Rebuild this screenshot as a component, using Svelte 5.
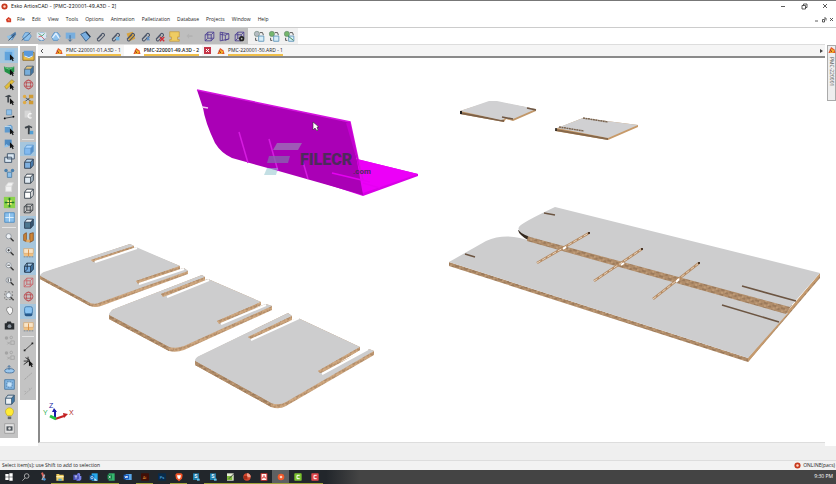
<script>
  const menus = ['File', 'Edit', 'View', 'Tools', 'Options', 'Animation', 'Palletization', 'Database', 'Projects', 'Window', 'Help'];

  const arrow = '<path d="M8 6l5 5-2 .2 1.4 2.2-1.2.8-1.4-2.4L8 13z" fill="#111"/>';
  const clip = '<path d="M3.5 10.5L9.5 4a2 2 0 0 1 2.6 2.4L6.5 12.2a1.6 1.6 0 0 1-2.6-1.6L9.2 5.4" fill="none" stroke="#4b5568" stroke-width="1.2"/>';
  const cube = (front, top, side, line) =>
    `<path d="M3 6h7v7H3z" fill="${front}"/><path d="M3 6l2.5-3.5H13L10 6z" fill="${top}"/><path d="M10 6l3-3.5v7L10 13z" fill="${side}"/><path d="M3 6h7v7H3zM3 6l2.5-3.5H13L10 6M13 2.5v7L10 13" fill="none" stroke="${line}" stroke-width="1" stroke-linejoin="round"/>`;
  const wire = (c) =>
    `<path d="M2.5 5.5h7v7h-7zM5.5 2.5h7v7h-7zM2.5 5.5l3-3M9.5 5.5l3-3M2.5 12.5l3-3M9.5 12.5l3-3" fill="none" stroke="${c}" stroke-width="1"/>`;
  const lens = (extra = '') =>
    `<circle cx="6.5" cy="6" r="3" fill="#eef2f6" stroke="#8a9098"/><path d="M8.8 8.3l3.4 3.6" stroke="#333" stroke-width="1.5"/>${extra}`;
  const net = '<path d="M3 8l3-5h4l3 4-3 5H5z" fill="#8fc3ee" stroke="#4d86bd" stroke-width=".8"/>';
  const balls = (c) =>
    `<circle cx="4" cy="4.5" r="2" fill="${c}"/><circle cx="9.5" cy="4" r="1.5" fill="none" stroke="${c}"/><path d="M5 9l3 3M5 12l3-3" stroke="${c}"/><path d="M9 8h4v4H9z" fill="none" stroke="${c}"/>`;
  const link = (c) =>
    `<circle cx="4.500" cy="4.500" r="3" fill="${c}" stroke="#5e7a6a" stroke-width=".6"/><path d="M8 3h3l1 3" fill="none" stroke="#444"/><path d="M6.500 7h6v6h-6z" fill="#d7edf8" stroke="#5b93b8"/><path d="M3 9v3h2" fill="none" stroke="#444"/>`;
  const globe =
    '<circle cx="7.5" cy="7.5" r="5" fill="none" stroke="#b94b50"/><ellipse cx="7.500" cy="7.500" rx="2.500" ry="5" fill="none" stroke="#b94b50"/><path d="M3 5.500h9M3 9.500h9" stroke="#b94b50"/>';
  const board =
    '<path d="M2 4h11v8H2z" fill="#efc183"/><path d="M2 3h11v5.500H2z" fill="#f8e4c7" stroke="#d29b58" stroke-width=".6"/><path d="M7.500 4v8" stroke="#d98a3c"/><path d="M2 12.500h11" stroke="#6d7f91" stroke-dasharray="2 1"/>';
  const hammer = '<path d="M3 4.500l5-2 4 2-1 1.500-2-1v8H6.800V5.500L4 6.500z" fill="#3d4349"/>';

  const topMain = [
    ['Select design', '<path d="M5 7l7-5 1 3-5 7z" fill="#4d7dad"/><path d="M2 7l3 5 4-2-2-4z" fill="#8fc1e6"/><path d="M4 12l7-7" stroke="#2b3f58"/>'],
    ['Add design', net + '<path d="M2 12L12 3" stroke="#355980"/>'],
    ['Convert', net + '<path d="M2 3h11v6L7.500 12 2 9z" fill="#d9e8f4"/><path d="M4 4l4 3 3-3" fill="none" stroke="#49a36d"/><path d="M4 8l3-1 4 4" fill="none" stroke="#cf5862"/>'],
    ['Fold', net + '<path d="M4 9l4-5 4 6" fill="none" stroke="#e5f2ff" stroke-width="1.5"/>'],
    ['Fold angle', '<path d="M2 3h11v7H2z" fill="#78aede"/><path d="M7 6v7l-2-2M7 13l2-2" stroke="#345f8b" fill="none"/>'],
    ['Bend', '<path d="M2 5l6-3 5 6-5 5z" fill="#79aee0" stroke="#345f8b"/><path d="M8 2l5 6" stroke="#24364b" stroke-width="1.500"/>'],
    ['Attach', clip],
    ['Attach part', clip + '<path d="M8 8h4v4H8z" fill="#6db2e2"/>'],
    ['Attach board', '<path d="M3 4l7-2 3 8-7 3z" fill="#d7a441"/>' + clip],
    ['Align part', clip + '<path d="M9 8l3 4M12 8l-3 4" stroke="#5f8fc4" stroke-width="1.500"/>'],
    ['Detach', clip + '<path d="M8 8l5 5M13 8l-5 5" stroke="#d32d36" stroke-width="1.500"/>'],
    ['Board', '<path d="M2 2h11v6h-2v3h2v2H2v-2h2V8H2z" fill="#efcc62" stroke="#bf9231" stroke-width=".7"/>'],
    ['Undo', '<path d="M4 7l3-3v6zM7 6h4v2H7z" fill="#b3b3b3"/>']
  ];
  const topCubes = [
    ['Wireframe', wire('#4b3f92')],
    ['Perspective', '<path d="M2.500 2.500l10 2v6l-10 2zM2.500 5l6 1v6l4-2M8.500 6l4-2M5 3v9" fill="none" stroke="#4b3f92"/>'],
    ['View setting', wire('#4b3f92') + '<circle cx="10" cy="10" r="3" fill="#222"/><circle cx="10" cy="10" r="1" fill="#bbb"/>']
  ];
  const topLinks = [
    ['Refresh', link('#b4bbc1')],
    ['Import', link('#74b66c')],
    ['Replace', link('#74b66c') + '<path d="M6 7l6 5" stroke="#287c3e"/>']
  ];

  const colA = [
    [
      ['Select', '<path d="M2 3h9v10H2z" fill="#5fa3dc"/><path d="M2 3l2-2h9v9l-2 3V3z" fill="#8cc4f1"/>' + arrow, 1],
      ['Select face', '<path d="M1 3l4 1h4l4-1v6l-5 3-6-3z" fill="#229146"/><path d="M2 4l5 2 5-2" stroke="#75d28d" fill="none"/>' + arrow],
      ['Measure', '<path d="M2 10l8-8 3 2-9 9z" fill="#e3bf3a" stroke="#8b742a" stroke-width=".6"/>' + arrow],
      ['Select tool', '<path d="M2 4l5-2 3 2-3 1v6H5V5z" fill="#41474d"/>' + arrow],
      ['Place', '<path d="M4 2h6v6H4z" fill="#8fc0e9" stroke="#4e7ea6" stroke-width=".6"/><path d="M1 12l12-2" stroke="#303b46"/><circle cx="2" cy="12" r="1"/><circle cx="12" cy="10" r="1"/>'],
      ['Move', '<path d="M2 4l7-2 2 2v7H2z" fill="#5e9ace"/><path d="M2 4h7v7" fill="none" stroke="#c7e2f5"/>' + arrow],
      ['Rotate', '<path d="M2 3h8v7H2z" fill="#4e8ac1"/><path d="M1 12l3-4 3 3z" fill="#8fc3ee"/>' + arrow],
      ['Copy', '<path d="M5 2h8v6H5zM2 6h8v6H2z" fill="#dce9f4" stroke="#364a62"/>'],
      ['Mate', '<path d="M5 6h5v6H5z" fill="#8dc1ec" stroke="#4e7ea6"/><circle cx="3.500" cy="4" r="2" fill="#497fad"/><circle cx="11" cy="4" r="2" fill="#497fad"/>'],
      ['Hide', '<path d="M3 6h7v6H3zM3 6l3-4h6l-2 4" fill="#f2f2f2" stroke="#d9d9d9"/>'],
      ['Center', '<path d="M1 1h13v13H1z" fill="#8bd34a"/><path d="M7.500 2v11M2 7.500h11" stroke="#1e7e28" stroke-width="2"/><path d="M5 5h5v5H5z" fill="#fff176"/><path d="M7.500 4v7M4 7.500h7" stroke="#286b2b"/>'],
      ['Grid', '<path d="M2 2h11v11H2z" fill="#8bc1ee"/><path d="M7.500 2v11M2 7.500h11" stroke="#e5f4ff"/><path d="M2 2h11v11H2z" fill="none" stroke="#4b8bc0"/>']
    ],
    [
      ['Zoom', lens()],
      ['Zoom in', lens('<path d="M6.500 4.500v3M5 6h3" stroke="#333"/>')],
      ['Zoom out', lens('<path d="M5 6h3" stroke="#333"/>')],
      ['Zoom scale', lens('<path d="M6 4v4M9 4v3" stroke="#333"/>')],
      ['Zoom extents', lens('<path d="M2 2h9v9H2z" fill="none" stroke="#777" stroke-dasharray="2 2"/>')],
      ['Pan', '<path d="M4 7l1-3h2l1-1 1 1 2 1v4l-2 3H7z" fill="#f6f6f6" stroke="#828282"/>'],
      ['Snapshot', '<path d="M2 5h2l1-2h4l1 2h3v7H2z" fill="#292d31"/><circle cx="7.500" cy="8.300" r="2.200" fill="#89929b"/>'],
      ['Group', balls('#a4a4a4')],
      ['Ungroup', balls('#a4a4a4')],
      ['Orbit', '<ellipse cx="7.500" cy="9" rx="5.500" ry="2.500" fill="#9bc8ee" stroke="#446f9b"/><path d="M7 8V3l-2 2M7 3l2 2" fill="none" stroke="#446f9b"/>'],
      ['View plane', '<path d="M2 2h11v11H2z" fill="#85b9e6" stroke="#4676a1"/><path d="M4.500 4.500h6v6h-6z" fill="#c2e1fa" stroke="#4676a1" stroke-dasharray="2 1"/>'],
      ['Extrude', cube('#eef2f5', '#d3dde6', '#407cad', '#35536d')],
      ['Light', '<path d="M5 10C0 4 5 1 7.500 1S15 4 10 10z" fill="#ffeb35" stroke="#b49a14" stroke-width=".6"/><path d="M5.500 11h4v3h-4z" fill="#61666d"/>'],
      ['Render', '<path d="M2 2h11v11H2z" fill="#e4e4e4" stroke="#999"/><path d="M4 5h7v5H4z" fill="#4e555b"/><circle cx="7.500" cy="7.500" r="1.500" fill="#ddd"/>']
    ]
  ];
  const colB = [
    [
      ['Pallet', '<path d="M1 4h13v9H1z" fill="#edbd44" stroke="#8f6b24"/><path d="M2 2h11v6l-5 3-6-3z" fill="#5999db"/><path d="M3 8l5 2 4-2" fill="none" stroke="#fff"/>'],
      ['Wrap', cube('#78aedb', '#e6c478', '#3f78a9', '#4b6174')],
      ['Globe', globe],
      ['Cut', '<path d="M2 4l9 6M2 11l9-7" stroke="#3e4a55"/><circle cx="3" cy="4" r="2" fill="#e0ab44"/><circle cx="3" cy="11" r="2" fill="#e0ab44"/><path d="M8 2h5v4H8zM8 9h5v4H8z" fill="#cf9b35"/>'],
      ['Copy view', '<path d="M3 3h7v8H3z" fill="#d7d7d7"/><path d="M11 7a2.500 2.500 0 1 0 0 4" fill="none" stroke="#f5f5f5" stroke-width="1.500"/>'],
      ['Hammer', hammer + '<path d="M9 9h4v4H9z" fill="#519ed3"/>']
    ],
    [
      ['Solid', cube('#82baf0', '#aed7fc', '#548fca', '#609bd4'), 1],
      ['Solid lines', cube('#7fb0df', '#b4d6f3', '#4d86bd', '#26384e')],
      ['Hidden lines', cube('#dfe9f1', '#ffffff', '#b4c5d3', '#303b46')],
      ['White', cube('#ffffff', '#ffffff', '#efefef', '#303b46')],
      ['Wire', wire('#3f4449')],
      ['Perspective', cube('#4e7891', '#eaf3fa', '#385a76', '#26384e'), 1],
      ['Closure', '<path d="M2 4l3-2v10l-3-1zM9 3l4-1v9l-4 2z" fill="#d08738" stroke="#8a5526"/><path d="M5 10h4v3H5z" fill="#e7ae66"/>', 1],
      ['Texture', board, 1],
      ['Edges', cube('#75ace0', '#a8d0f0', '#4278aa', '#14293d') + '<path d="M6 2.500v7l-3 3" fill="none" stroke="#14293d"/>', 1],
      ['Bounding box', wire('#c8656b')],
      ['Sphere', globe],
      ['Shadow', '<rect x="3" y="6" width="9" height="7" rx="2" fill="#26588a"/><rect x="3" y="2" width="9" height="8" rx="2" fill="#8bc4f2" stroke="#3c76a9"/>', 1],
      ['Board surface', board]
    ],
    [
      ['Distance', '<path d="M3 12L12 4" stroke="#414141"/><path d="M2 11h2v2H2zM11 3h2v2h-2z" fill="#222"/>'],
      ['Angle', '<path d="M2 11l7-5M4 3l5 3M2 7h5M7 2v6" stroke="#222"/>' + arrow],
      ['Point', '<path d="M3 12L12 4" stroke="#999" stroke-dasharray="2 1"/>'],
      ['Path', '<path d="M3 12L12 4M3 8l2 2M8 5l2 2" stroke="#a4a4a4" stroke-dasharray="2 1"/>']
    ]
  ];

  const tabs = [
    { name: 'PMC-220001-01.A3D - 1', active: false },
    { name: 'PMC-220001-49.A3D - 2', active: true },
    { name: 'PMC-220001-50.ARD - 1', active: false }
  ];

  const trays = [
    { depth: 'M40 276L43 273 130 244 134 246 134 248 93 262 91 260 136 248 180 266 180 269 138 284 136 281 184 268 188 271 188 274 101 306Q95 308 90 306L40 279Z',
      face: 'M40 276Q40 274 44 272L130 244 134 246 91 260 93 261 136 247 180 266 136 281 138 283 184 268 188 271 101 302Q96 305 90 303Z',
      cuts: ['M91 260L134 246V248L93 262Z', 'M136 281L180 266V269L138 284Z'],
      gaps: 'M95 262L137 248M139 284L184 269' },
    { depth: 'M109 315L112 310 202 275 205 277 205 281 161 297 161 294 208 279 261 302 261 305 219 323 217 321 266 304 272 306V310L184 350Q176 353 169 351L109 319Z',
      face: 'M109 315Q109 312 114 309L202 275 205 277 161 294 164 296 208 279 261 302 217 321 219 323 266 304 272 306 184 346Q176 349 169 347Z',
      cuts: ['M161 294L205 277V281L163 297Z', 'M217 321L261 302V305L219 324Z'],
      gaps: 'M167 297L209 280M221 324L266 305' },
    { depth: 'M195 361L198 357 288 313 292 316V320L251 339 248 337 298 318 360 347V350L320 374 318 372 369 349 374 351V355L286 406Q279 410 271 407L195 365Z',
      face: 'M195 361Q195 358 199 356L288 313 292 316 248 337 251 339 298 318 360 347 318 371 321 373 369 349 374 351 286 402Q279 406 271 403Z',
      cuts: ['M248 337L292 316V319L251 339Z', 'M318 371L360 347V350L320 373Z'],
      gaps: 'M251 340L299 318M322 374L368 349M360 352L369 347' }
  ];
  const crosses = ['M537 263L589 233', 'M594 281L642 249', 'M653 299L699 263'];

  const tasks = [
    ['Start', '<path d="M2 3h5v4H2zM8 2h5v5H8zM2 8h5v4H2zM8 8h5v5H8z" fill="#fff"/>', 0],
    ['Search', '<circle cx="8.500" cy="6" r="3.500" fill="none" stroke="#ddd"/><path d="M6 9l-4 4" stroke="#ddd"/>', 0],
    ['Snip', '<path d="M6 1l3 8" stroke="#e2655c" stroke-width="3"/><path d="M10 4l-4 8" stroke="#a8b7c6" stroke-width="2"/><circle cx="9.500" cy="11" r="2" fill="#4d94d1"/>', 0],
    ['Explorer', '<path d="M2 3h4l1 1h6v9H2z" fill="#efcd62"/><path d="M2 6h11v2H2z" fill="#fff1b6"/><path d="M5 10h5v3H5z" fill="#4ba5d4"/>', 1],
    ['Teams', '<circle cx="10" cy="4" r="2.500" fill="#7b83eb"/><path d="M2 4h8v8H2z" fill="#4b53bc"/><path d="M10 6h4v5l-2 2H6l4-3z" fill="#7b83eb"/><path d="M4 6h4M6 6v4" stroke="#fff"/>', 1],
    ['Outlook', '<path d="M4 2h9v11H4z" fill="#28a8ea"/><path d="M1 5h7v7H1z" fill="#0a64b8"/><circle cx="4.500" cy="8.500" r="1.800" fill="none" stroke="#fff"/><path d="M8 9l5 4H8z" fill="#bfe5ff"/>', 1],
    ['Excel', '<path d="M4 2h9v11H4z" fill="#35b66d"/><path d="M2 4h7v7H2z" fill="#107c41"/><path d="M4 5.500l3 4M7 5.500l-3 4" stroke="#fff"/>', 1],
    ['Word', '<path d="M4 3h9v9H4z" fill="#59a7e8"/><path d="M1 4h8v7H1z" fill="#185abd"/><path d="M3 6l1 3 1-3 1 3 1-3" fill="none" stroke="#fff"/>', 0],
    ['Illustrator', '<rect x="1.500" y="2" width="12" height="11" rx="1" fill="#400f08"/><text x="4" y="10" font-size="6" fill="#f59b35" font-family="Roboto">Ai</text>', 1],
    ['Photoshop', '<rect x="1.500" y="2" width="12" height="11" rx="1" fill="#082b4a"/><text x="4" y="10" font-size="6" fill="#56b9f4" font-family="Roboto">Ps</text>', 0],
    ['Brave', '<path d="M4 2h7l2 2-1 6-4.500 4L3 10 2 4z" fill="#f25427"/><path d="M4.500 5h6l-1 4-2 2-2-2z" fill="#fff"/>', 1],
    ['Studio', '<path d="M3 2h9v10H3z" fill="#1e7ca9"/><text x="5" y="9" font-size="8" font-weight="700" fill="#e9f7ff" font-family="Roboto">S</text><path d="M9 10h4v3H9z" fill="#64c4ec"/>', 0],
    ['Studio designer', '<path d="M3 2h9v10H3z" fill="#1e7ca9"/><text x="5" y="9" font-size="8" font-weight="700" fill="#e9f7ff" font-family="Roboto">S</text><path d="M9 10h4v3H9z" fill="#64c4ec"/>', 1],
    ['Notepad++', '<path d="M3 2h10v11H3z" fill="#e7efd5"/><path d="M3 6h8v6H3z" fill="#7dbb3b"/><path d="M6 10l7-7" stroke="#3d4143" stroke-width="1.500"/>', 1],
    ['Presentation', '<circle cx="7.500" cy="7.500" r="5.500" fill="#d4472d"/><path d="M7.500 2v6h5.500A6 6 0 0 0 7.500 2" fill="#f4a08c"/><path d="M3 6h5v5H3z" fill="#a72b17"/>', 1],
    ['Acrobat', '<path d="M2.500 2h10v11h-10z" fill="#e83b38"/><path d="M4 3h7v9H4z" fill="#fff3f2"/><path d="M5 10l2.500-5 2.500 5M5 8.500h5" fill="none" stroke="#d52827"/>', 1],
    ['ArtiosCAD', '<circle cx="7.500" cy="7.500" r="5" fill="#ef5a2c"/><circle cx="7.500" cy="7.500" r="2" fill="#ffd4bf"/>', 2],
    ['Camtasia', '<rect x="2" y="2" width="11" height="11" rx="1" fill="#7ac22e"/><path d="M10 5H6v5h4" fill="none" stroke="#fff" stroke-width="1.500"/>', 1],
    ['Recorder', '<rect x="2" y="2" width="11" height="11" rx="1" fill="#e0474c"/><path d="M10 5H6v5h4" fill="none" stroke="#fff" stroke-width="1.500"/>', 1]
  ];
</script>

{#snippet tool(item)}
  <button class="tool" class:on={item[2]} aria-label={item[0]} title={item[0]}>
    <svg viewBox="0 0 15 15">{@html item[1]}</svg>
  </button>
{/snippet}

{#snippet logo()}
  <svg class="logo" viewBox="0 0 8 8"><circle cx="4" cy="4" r="3.500" fill="#c8391d" /><circle cx="4" cy="4" r="1.400" fill="#ffd9c8" /></svg>
{/snippet}

{#snippet mark()}
  <svg class="mark" viewBox="0 0 9 9"><path d="M1 8L4 1l4 3 1 4z" fill="#e2552e" /><path d="M4 3l4 2-2 3H3z" fill="#f2b32a" /><path d="M3 4l2 3" stroke="#8a2f18" /></svg>
{/snippet}

<div class="app">
  <header class="title">
    {@render logo()}
    <span>Esko ArtiosCAD - [PMC-220001-49.A3D - 2]</span>
    <div class="win">
      <button aria-label="Minimize"><svg viewBox="0 0 8 8"><path d="M2 4.500h4" /></svg></button>
      <button aria-label="Restore"><svg viewBox="0 0 8 8"><path d="M2 3.500h3.500V7H2zM3.500 3.500V2H7v3.500H5.500" /></svg></button>
      <button aria-label="Close"><svg viewBox="0 0 8 8"><path d="M2 2l4 4M6 2L2 6" /></svg></button>
    </div>
  </header>

  <nav class="menu">
    <svg class="logo" viewBox="0 0 8 8"><path d="M2 7L1 4l3-3 3 2v4z" fill="#d43c25" /><path d="M3 4l2-1v3z" fill="#f6b09a" /></svg>
    {#each menus as m}<button>{m}</button>{/each}
    <div class="win small">
      <button aria-label="Minimize document"><svg viewBox="0 0 8 8"><path d="M3 6h3" /></svg></button>
      <button aria-label="Restore document"><svg viewBox="0 0 8 8"><path d="M2.500 4.500h2V7h-2zM4 3h2v2.500" /></svg></button>
      <button aria-label="Close document"><svg viewBox="0 0 8 8"><path d="M2 3l3 3M5 3L2 6" /></svg></button>
    </div>
  </nav>

  <div class="bar">
    <div class="gray">
      <div class="set main">{#each topMain as t}{@render tool(t)}{/each}</div>
      <div class="set">{#each topCubes as t}{@render tool(t)}{/each}</div>
    </div>
    <div class="set light">{#each topLinks as t}{@render tool(t)}{/each}</div>
  </div>

  <div class="body">
    <aside class="rail a">
      {#each colA as g}<div class="group" style:flex-grow={g.length}>{#each g as t}{@render tool(t)}{/each}</div>{/each}
    </aside>
    <aside class="rail b">
      {#each colB as g}<div class="group" style:flex-grow={g.length}>{#each g as t}{@render tool(t)}{/each}</div>{/each}
    </aside>

    <main>
      <div class="tabs">
        <button class="step" aria-label="Previous tab"><svg viewBox="0 0 6 6"><path d="M4 1L2 3l2 2" fill="none" stroke="#555" /></svg></button>
        {#each tabs as t}
          <button class="tab" class:active={t.active}>{@render mark()}<span>{t.name}</span></button>
          {#if t.active}
            <button class="close" aria-label="Close tab"><svg viewBox="0 0 7 7"><path d="M2 2l3 3M5 2L2 5" stroke="#fff" /></svg></button>
          {/if}
        {/each}
        <button class="step last" aria-label="Next tab"><svg viewBox="0 0 6 6"><path d="M2 1l3 2-3 2z" fill="#444" /></svg></button>
      </div>

      <div class="canvas">
        <svg viewBox="40 58 785 384" preserveAspectRatio="xMinYMin meet">
          <defs>
            <pattern id="wood" width="7" height="5" patternUnits="userSpaceOnUse" patternTransform="rotate(20)">
              <rect width="7" height="5" fill="#c9a17a" />
              <path d="M0 1h3M4 3h2M2 4h1" stroke="#8f6d50" stroke-width=".8" />
              <path d="M3 2h2M0 3h1M5 0h1" stroke="#e0bc92" stroke-width=".8" />
            </pattern>
            <pattern id="bark" width="9" height="5" patternUnits="userSpaceOnUse" patternTransform="rotate(17)">
              <rect width="9" height="5" fill="#b08c69" />
              <path d="M0 1h4M5 3h3" stroke="#7c5f46" stroke-width=".8" />
              <path d="M4 2h2M1 4h2" stroke="#d0ac86" />
            </pattern>
          </defs>

          <g>
            <path d="M460 111L492 101 536 109V111L513 121 506 119 504 122 460 114Z" fill="#c19769" />
            <path d="M460 112L504 120V122L460 114Z" fill="#7d6148" />
            <path d="M460 111L489 101 497 101 536 109 513 119 503 117 505 119 501 120Z" fill="#d0d0d2" />
            <path d="M527 108l9 2M502 117l11 2" stroke="#6f5846" stroke-width="1.500" />
            <path d="M461 111v3" stroke="#222" stroke-width="2" />
            <path d="M555 129L583 118 638 125V127L608 140 555 131Z" fill="#c79a69" />
            <path d="M556 129L608 138V140L556 131Z" fill="#86684b" />
            <path d="M557 128L583 118 638 125 608 138Z" fill="#d0d0d2" />
            <path d="M583 118l25 4M559 127l25 4" stroke="#796450" stroke-width="1.500" stroke-dasharray="2 .5" />
            <path d="M556 128v3" stroke="#222" stroke-width="1.500" />
          </g>

          <g>
            <path d="M518 230Q519 235 528 240L540 242V238Z" fill="#34291f" />
            <path d="M449 262L748 358 820 274V278L748 362 449 266Z" fill="url(#bark)" />
            <path d="M748 358L820 273V276L748 362Z" fill="#c59a6d" />
            <path d="M449 262L486 241Q502 234 520 238L528 240 788 313 748 358Z" fill="#cdcdce" />
            <path d="M528 236L792 305 786 314 527 241Z" fill="url(#bark)" />
            <path d="M555 207L820 273 790 307 530 237Q516 232 519 227 521 223 555 207Z" fill="#cdcdce" />
            {#each crosses as c}
              <path d={c} stroke="#b58a62" stroke-width="2.500" />
              <path d={c} stroke="#e9d5bd" stroke-width="1" stroke-dasharray="4 2" />
            {/each}
            <path d="M563 249l3-2M621 265l3-2M676 282l3-3" stroke="#fff" stroke-width="2" />
            <path d="M588 233h2M641 249h2M698 263h2" stroke="#4a3525" stroke-width="2" />
            <path d="M742 286L796 301M722 305L779 322M544 213l11 2M465 254l10 3" stroke="#6c5542" stroke-width="1.600" />
          </g>

          <g>
            {#each trays as t}
              <path d={t.depth} fill="url(#wood)" />
              <path d={t.face} fill="#cdcdce" />
              {#each t.cuts as c}<path d={c} fill="url(#wood)" />{/each}
              <path d={t.gaps} stroke="#fff" stroke-width="2" />
            {/each}
            <path d="M40 276L90 303V306L40 279ZM109 315L169 347V351L109 319ZM195 361L271 403V407L195 365Z" fill="url(#bark)" />
          </g>

          <g>
            <path d="M357 159L418 174V176L363 196 320 182 332 170Z" fill="#d800e6" />
            <path d="M357 159L418 174 363 193 350 170Z" fill="#ec00f8" />
            <path d="M197 90L350 122 363 195 275 170 232 158Q221 153 215 143 205 122 203 108Z" fill="#aa00b6" />
            <path d="M197 90L350 122 358 159 363 180" fill="none" stroke="#d512df" stroke-width="1.500" />
            <path d="M346 123l4-1 8 37 2 12z" fill="#c400d0" />
            <path d="M239 132l9 31M269 139l9 32M303 162l5 17" stroke="#d51ce0" stroke-width="1.500" />
            <path d="M332 173l38 9M363 183l17 5" stroke="#e600f2" stroke-width="1.500" />
            <path d="M202 107l6 1" stroke="#f3c8f5" stroke-width="1.500" />
          </g>

          <g>
            <path d="M277 143h25l-4 7h-25z" fill="#9a78b6" opacity=".75" />
            <path d="M269 156h21l-2 7h-21z" fill="#8468ac" opacity=".75" />
            <path d="M267 168h11l-2 7h-12z" fill="#91c5ce" opacity=".55" />
            <text x="300" y="165" class="brand">FILECR</text>
            <text x="353" y="174" class="domain">.com</text>
            <path d="M313 122v8l2-2 2 3 1-1-1-3h2z" fill="#fff" stroke="#333" stroke-width=".6" />
          </g>

          <g>
            <path d="M55 418V410" stroke="#1c1fa8" stroke-width="2" /><path d="M52 412l2-4 3 4z" fill="#1c1fa8" />
            <path d="M55 419l9-3" stroke="#c42222" stroke-width="2" /><path d="M63 413l5 1-4 4z" fill="#c42222" />
            <path d="M56 419l-6-3" stroke="#28c745" stroke-width="3" />
            <text x="49" y="408" class="axis" fill="#1c1fa8">Z</text>
            <text x="69" y="415" class="axis" fill="#b21f2b">X</text>
            <text x="43" y="415" class="axis" fill="#37b457">Y</text>
          </g>
        </svg>
      </div>
    </main>

    <aside class="dock">
      <button>{@render mark()}<span>PMC-220001</span></button>
    </aside>
  </div>

  <footer class="status">
    <span>Select item(s); use Shift to add to selection</span>
    <span class="online">{@render logo()}ONLINE(pacs)</span>
  </footer>

  <div class="taskbar">
    {#each tasks as t}
      <button class:open={t[2]} class:current={t[2] === 2} aria-label={t[0]}><svg viewBox="0 0 15 15">{@html t[1]}</svg></button>
    {/each}
    <time>9:30 PM</time>
  </div>
</div>

<style>
  :global(body) { margin: 0; background: #fff; }
  .app {
    display: flex; flex-direction: column; height: 100vh; overflow: hidden;
    box-sizing: border-box; border-top: 1px solid #777;
    font: 5px/8px "Open Sans", "Noto Sans", sans-serif; color: #222; background: #fff;
  }
  button { font: inherit; color: inherit; background: none; border: 0; padding: 0; margin: 0; display: flex; align-items: center; justify-content: center; }
  svg { display: block; }
  .logo { width: 7px; height: 7px; flex: none; }
  .title { display: flex; align-items: center; gap: 3px; height: 10px; padding-left: 1px; font-family: "Inter", "Open Sans", sans-serif; }
  .win { display: flex; margin-left: auto; gap: 13px; padding-right: 7px; }
  .win svg { width: 8px; height: 8px; fill: none; stroke: #333; stroke-width: .8; }
  .win.small { gap: 0; padding-right: 0; }
  .menu { display: flex; align-items: center; gap: 7px; height: 16px; padding-left: 5px; border-bottom: 1px solid #ccc; }
  .menu > .logo { margin-right: -2px; }

  .bar { display: flex; height: 16px; }
  .gray { display: flex; background: #bebebe; padding: 0 1px 0 4px; gap: 5px; }
  .set { display: flex; align-items: center; width: 45px; }
  .set.main { width: 193px; }
  .set.light { background: #f1f1f1; padding: 0 1px 0 4px; }
  .set .tool { flex: 1; min-width: 0; }
  .tool svg { width: 13px; height: 13px; flex: none; }

  .body { display: flex; flex: 1; min-height: 0; gap: 2px; }
  .rail { display: flex; flex-direction: column; gap: 5px; background: #c3c3c3; box-sizing: border-box; margin-top: 2px; padding: 2px 0; }
  .rail.a { width: 18px; height: 392px; }
  .rail.b { width: 16px; height: 354px; }
  .group { display: flex; flex-direction: column; flex-basis: 0; position: relative; }
  .group + .group::before { content: ""; position: absolute; top: -3px; left: 2px; right: 2px; height: 1px; background: #e4e4e4; }
  .group .tool { flex: 1; min-height: 0; }
  .tool.on { background: #a6c6dd; }

  main { display: flex; flex-direction: column; flex: 1; min-width: 0; padding-bottom: 3px; background: #f0f0f0; }
  .tabs { display: flex; align-items: center; height: 12px; background: #f5f5f5; border-top: 1px solid #ddd; box-sizing: border-box; }
  .step { width: 8px; height: 10px; }
  .step svg { width: 6px; height: 6px; }
  .step.last { margin-left: auto; }
  .tab { height: 11px; gap: 3px; padding: 0 3px 0 8px; }
  .tab span { border-bottom: 2px solid #efbf4a; line-height: 8px; white-space: nowrap; }
  .tab.active { font-weight: 600; background: #fff; }
  .close { width: 7px; height: 7px; margin-left: 2px; background: #c43648; }
  .close svg { width: 7px; height: 7px; }
  .close + .tab { padding-left: 5px; }
  .mark { width: 9px; height: 8px; flex: none; }
  .canvas { flex: 1; min-height: 0; overflow: hidden; background: #fff; border-top: 2px solid #8a8a8a; border-left: 2px solid #8a8a8a; border-bottom: 1px solid #ddd; }
  .canvas svg { width: 100%; height: 100%; }
  .brand { font: 900 16px "Roboto", sans-serif; fill: #4e2a5c; }
  .domain { font: 700 8px "Roboto", sans-serif; fill: #4e2a5c; }
  .axis { font: 7px "Liberation Sans", sans-serif; }

  .dock { width: 9px; }
  .dock button { writing-mode: vertical-rl; width: 9px; height: 56px; gap: 3px; justify-content: flex-start; border: 1px solid #aaa; background: #eee; box-sizing: border-box; color: #555; margin-top: 1px; }

  .status { display: flex; justify-content: space-between; align-items: flex-end; height: 24px; padding: 0 1px 1px 2px; box-sizing: border-box; background: linear-gradient(#efefef 14px, #ddd 14px, #ddd 15px, #f2f2f2 15px); }
  .online { display: flex; align-items: center; gap: 2px; }
  .taskbar { display: flex; align-items: stretch; height: 14px; background: linear-gradient(90deg, #22262b 39%, #444 43%); color: #fff; }
  .taskbar button { width: 17px; flex: none; box-sizing: border-box; border-bottom: 1px solid transparent; }
  .taskbar svg { width: 10px; height: 10px; }
  .taskbar .open { border-bottom-color: #a0a33c; }
  .taskbar .current { background: #5d6062; }
  .taskbar time { margin: 2px 3px 0 auto; }
</style>
